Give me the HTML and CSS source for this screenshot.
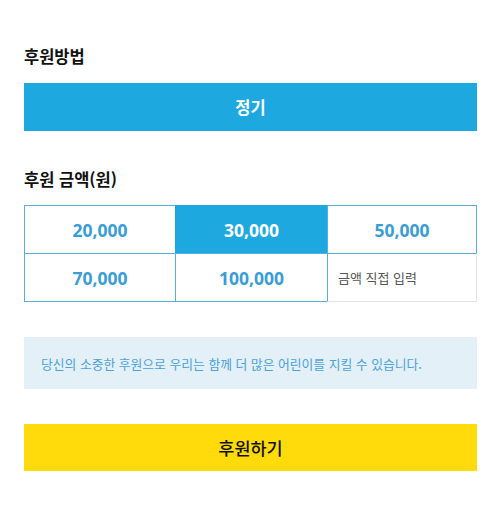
FILE: index.html
```html
<!DOCTYPE html>
<html lang="ko">
<head>
<meta charset="utf-8">
<link rel="stylesheet" href="styles.css">
</head>
<body>
<div class="wrap">
  <h2 class="title t1">후원방법</h2>
  <div class="method">정기</div>
  <h2 class="title t2">후원 금액(원)</h2>
  <div class="grid">
    <div class="cell">20,000</div>
    <div class="cell on">30,000</div>
    <div class="cell">50,000</div>
    <div class="cell">70,000</div>
    <div class="cell">100,000</div>
    <div class="cell input">금액 직접 입력</div>
  </div>
  <div class="info">당신의 소중한 후원으로 우리는 함께 더 많은 어린이를 지킬 수 있습니다.</div>
  <div class="submit">후원하기</div>
</div>
</body>
</html>
```
FILE: styles.css
```css
html, body { margin: 0; padding: 0; background: #fff; }
body { font-family: "Noto Sans CJK KR", "Noto Sans", sans-serif; color: #111; }
.wrap { width: 453px; margin-left: 24px; padding-top: 44px; }
.title { margin: 0; font-size: 16.5px; font-weight: 700; line-height: 24px; color: #111; }
.t1 { margin-bottom: 15px; }
.t2 { margin-top: 36px; margin-bottom: 14px; }
.method { height: 48px; background: #1ea8e0; color: #fff; font-size: 16.5px; font-weight: 700; display: flex; align-items: center; justify-content: center; }
.grid { display: grid; grid-template-columns: 151px 152px 150px; grid-template-rows: 48px 49px; }
.cell { border: 1px solid #5aaedc; margin: 0 -1px -1px 0; display: flex; align-items: center; justify-content: center; font-family: "Noto Sans", sans-serif; font-weight: 700; font-size: 17.5px; color: #3b9dd4; }
.cell:nth-child(3), .cell:nth-child(6) { margin-right: 0; }
.cell:nth-child(n+4) { margin-bottom: 0; }
.cell.on { background: #1ea8e0; color: #fff; border-color: #1ea8e0; }
.cell.input { justify-content: flex-start; padding-left: 10px; font-family: "Noto Sans CJK KR", sans-serif; font-weight: 400; font-size: 13px; color: #555; border-color: #e4e4e4; border-left-color: #5aaedc; border-top-color: #5aaedc; }
.info { margin-top: 35px; height: 52px; background: #e3f0f7; color: #4aa2d6; font-size: 12.8px; display: flex; align-items: center; padding-left: 17px; }
.submit { margin-top: 35px; height: 47px; background: #ffdb0b; color: #111; font-size: 17.5px; font-weight: 500; display: flex; align-items: center; justify-content: center; }
```
